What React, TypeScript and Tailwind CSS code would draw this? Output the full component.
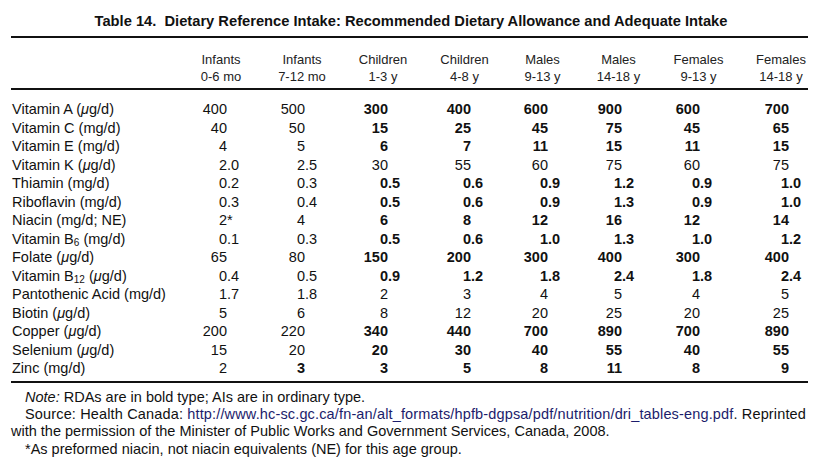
const GRID = "grid grid-cols-[169px_82px_80px_82px_81px_75px_77px_83px_68px]";

const cols = [
  { top: "Infants", sub: "0-6 mo", int: "w-[47px]", head: "" },
  { top: "Infants", sub: "7-12 mo", int: "w-[43px]", head: "" },
  { top: "Children", sub: "1-3 y", int: "w-[46px]", head: "" },
  { top: "Children", sub: "4-8 y", int: "w-[47px]", head: "" },
  { top: "Males", sub: "9-13 y", int: "w-[43px]", head: "" },
  { top: "Males", sub: "14-18 y", int: "w-[42px]", head: "" },
  { top: "Females", sub: "9-13 y", int: "w-[43px]", head: "" },
  { top: "Females", sub: "14-18 y", int: "w-[49px]", head: "pl-[14px]" },
];

const Mu = () => <i>μ</i>;

type Row = { label: React.ReactNode; values: string[]; boldFrom: number };

const rows: Row[] = [
  { label: <>Vitamin A (<Mu />g/d)</>, values: ["400", "500", "300", "400", "600", "900", "600", "700"], boldFrom: 2 },
  { label: "Vitamin C (mg/d)", values: ["40", "50", "15", "25", "45", "75", "45", "65"], boldFrom: 2 },
  { label: "Vitamin E (mg/d)", values: ["4", "5", "6", "7", "11", "15", "11", "15"], boldFrom: 2 },
  { label: <>Vitamin K (<Mu />g/d)</>, values: ["2.0", "2.5", "30", "55", "60", "75", "60", "75"], boldFrom: 8 },
  { label: "Thiamin (mg/d)", values: ["0.2", "0.3", "0.5", "0.6", "0.9", "1.2", "0.9", "1.0"], boldFrom: 2 },
  { label: "Riboflavin (mg/d)", values: ["0.3", "0.4", "0.5", "0.6", "0.9", "1.3", "0.9", "1.0"], boldFrom: 2 },
  { label: "Niacin (mg/d; NE)", values: ["2*", "4", "6", "8", "12", "16", "12", "14"], boldFrom: 2 },
  { label: <>Vitamin B<sub className="text-[10px]">6</sub> (mg/d)</>, values: ["0.1", "0.3", "0.5", "0.6", "1.0", "1.3", "1.0", "1.2"], boldFrom: 2 },
  { label: <>Folate (<Mu />g/d)</>, values: ["65", "80", "150", "200", "300", "400", "300", "400"], boldFrom: 2 },
  { label: <>Vitamin B<sub className="text-[10px]">12</sub> (<Mu />g/d)</>, values: ["0.4", "0.5", "0.9", "1.2", "1.8", "2.4", "1.8", "2.4"], boldFrom: 2 },
  { label: "Pantothenic Acid (mg/d)", values: ["1.7", "1.8", "2", "3", "4", "5", "4", "5"], boldFrom: 8 },
  { label: <>Biotin (<Mu />g/d)</>, values: ["5", "6", "8", "12", "20", "25", "20", "25"], boldFrom: 8 },
  { label: <>Copper (<Mu />g/d)</>, values: ["200", "220", "340", "440", "700", "890", "700", "890"], boldFrom: 2 },
  { label: <>Selenium (<Mu />g/d)</>, values: ["15", "20", "20", "30", "40", "55", "40", "55"], boldFrom: 2 },
  { label: "Zinc (mg/d)", values: ["2", "3", "3", "5", "8", "11", "8", "9"], boldFrom: 1 },
];

// split "0.5" -> ["0", ".5"], "2*" -> ["2", "*"]
const split = (v: string) => {
  const m = v.match(/^(\d+)(.*)$/);
  return m ? [m[1], m[2]] : [v, ""];
};

export default function App() {
  return (
    <div className="w-[822px] h-[466px] bg-white text-[#111] font-['Liberation_Sans',Arial,sans-serif] pt-[13px]">
      <h1 className="text-center font-bold text-[14.7px] leading-[17px]">
        Table 14.&nbsp; Dietary Reference Intake: Recommended Dietary Allowance and Adequate Intake
      </h1>

      <div className="mx-[11px] w-[797px] mt-[6px] border-t-2 border-[#111]">
        <div className={`${GRID} pt-[13px] pb-[3px] text-[13px] leading-[17px] text-[#222] border-b-2 border-[#111]`}>
          <div />
          {cols.map((c, i) => (
            <div key={i} className={`text-center ${c.head}`}>
              <div>{c.top}</div>
              <div>{c.sub}</div>
            </div>
          ))}
        </div>

        <div className="pt-[10px] pb-[3px] text-[14.5px] leading-[18.5px] border-b-2 border-[#111]">
          {rows.map((r, ri) => (
            <div key={ri} className={GRID}>
              <div className="pl-px whitespace-nowrap">{r.label}</div>
              {r.values.map((v, ci) => {
                const [a, b] = split(v);
                return (
                  <div key={ci} className={`flex ${ci >= r.boldFrom ? "font-bold" : ""}`}>
                    <span className={`${cols[ci].int} text-right`}>{a}</span>
                    <span>{b}</span>
                  </div>
                );
              })}
            </div>
          ))}
        </div>

        <div className="pt-[6px] text-[14.5px] leading-[17.4px]">
          <p className="indent-[14px]">
            <i>Note:</i> RDAs are in bold type; AIs are in ordinary type.
          </p>
          <p className="indent-[14px] whitespace-nowrap tracking-[0.15px]">
            Source: Health Canada:{" "}
            <span className="text-[#1c1c6b]">http://www.hc-sc.gc.ca/fn-an/alt_formats/hpfb-dgpsa/pdf/nutrition/dri_tables-eng.pdf</span>. Reprinted
          </p>
          <p>with the permission of the Minister of Public Works and Government Services, Canada, 2008.</p>
          <p className="indent-[14px]">*As preformed niacin, not niacin equivalents (NE) for this age group.</p>
        </div>
      </div>
    </div>
  );
}
